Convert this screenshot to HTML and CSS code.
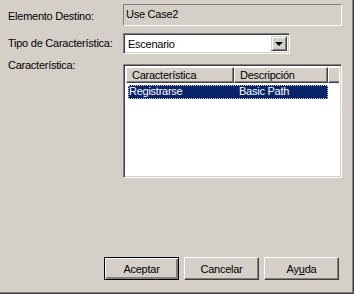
FILE: index.html
```html
<!DOCTYPE html>
<html lang="es">
<head>
  <meta charset="UTF-8">
  <title>Característica</title>
  <link rel="stylesheet" href="styles.css">
</head>
<body>
  <div class="dialog">
    <div class="form">
      <label class="lbl lbl-dest">Elemento Destino:</label>
      <div class="readonly">Use Case2</div>

      <label class="lbl lbl-tipo">Tipo de Característica:</label>
      <div class="combo">
        <span class="combo-text">Escenario</span>
        <span class="combo-btn"><span class="arrow"></span></span>
      </div>

      <label class="lbl lbl-car">Característica:</label>
      <div class="list">
        <div class="list-head">
          <span class="col col1">Característica</span>
          <span class="col col2">Descripción</span>
          <span class="col-rest"></span>
        </div>
        <div class="list-row selected">
          <span class="cell cell1">Registrarse</span>
          <span class="cell cell2">Basic Path</span>
        </div>
      </div>
    </div>

    <div class="buttons">
      <button class="btn default">Aceptar</button>
      <button class="btn">Cancelar</button>
      <button class="btn">Ay<u>u</u>da</button>
    </div>
  </div>
</body>
</html>
```

FILE: styles.css
```css
html, body {
  margin: 0;
  padding: 0;
}
body {
  font-family: "Liberation Sans", Arial, sans-serif;
  font-size: 11px;
  letter-spacing: -0.25px;
  color: #000;
  background: #d4d0c8;
}
.dialog {
  width: 354px;
  height: 294px;
  box-sizing: border-box;
  border-right: 1px solid #404040;
  border-bottom: 1px solid #404040;
  box-shadow: inset -1px -1px 0 #808080;
  display: flex;
  flex-direction: column;
  padding: 4px 12px 0 8px;
}
.form {
  display: grid;
  grid-template-columns: 115px 219px;
  row-gap: 0;
}
.lbl {
  line-height: 13px;
}
.lbl-dest { margin-top: 6px; }
.lbl-tipo { margin-top: 11px; }
.lbl-car { margin-top: 5px; }

.readonly {
  height: 22px;
  box-sizing: border-box;
  border: 1px solid;
  border-color: #808080 #fff #fff #808080;
  padding: 3px 0 0 2px;
  line-height: 13px;
}

.combo {
  margin-top: 7px;
  height: 21px;
  width: 167px;
  box-sizing: border-box;
  border: 1px solid;
  border-color: #808080 #fff #fff #808080;
  box-shadow: inset 1px 1px 0 #404040, inset -1px -1px 0 #d4d0c8;
  background: #fff;
  display: flex;
  align-items: stretch;
  padding: 2px;
}
.combo-text {
  flex: 1;
  padding: 2px 0 0 2px;
  line-height: 13px;
}
.combo-btn {
  width: 16px;
  box-sizing: border-box;
  background: #d4d0c8;
  border: 1px solid;
  border-color: #d4d0c8 #404040 #404040 #d4d0c8;
  box-shadow: inset 1px 1px 0 #fff, inset -1px -1px 0 #808080;
  display: flex;
  align-items: center;
  justify-content: center;
}
.arrow {
  width: 0;
  height: 0;
  border-left: 4px solid transparent;
  border-right: 4px solid transparent;
  border-top: 4px solid #000;
  margin-left: -1px;
}

.list {
  margin-top: 10px;
  height: 114px;
  box-sizing: border-box;
  border: 1px solid;
  border-color: #808080 #fff #fff #808080;
  box-shadow: inset 1px 1px 0 #404040, inset -1px -1px 0 #d4d0c8;
  background: #fff;
  padding: 2px;
  overflow: hidden;
}
.list-head {
  display: flex;
  height: 16px;
}
.col, .col-rest {
  box-sizing: border-box;
  background: #d4d0c8;
  border: 1px solid;
  border-color: #fff #404040 #404040 #fff;
  box-shadow: inset -1px -1px 0 #808080;
  padding: 1px 0 0 5px;
  line-height: 13px;
  white-space: nowrap;
}
.col1 { width: 108px; }
.col2 { width: 94px; }
.col-rest {
  flex: 1;
  border-right: none;
  box-shadow: inset 0 -1px 0 #808080;
}
.list-row {
  display: flex;
  height: 14px;
  margin-top: 2px;
  margin-left: 2px;
  width: 200px;
  box-sizing: border-box;
  line-height: 13px;
}
.list-row.selected {
  background: #0a246a;
  color: #fff;
  outline: 1px dotted #d4d0c8;
  outline-offset: -1px;
}
.cell { white-space: nowrap; }
.cell1 { width: 110px; padding-left: 1px; }
.cell2 { padding-left: 0; }

.buttons {
  margin-top: auto;
  margin-bottom: 13px;
  display: flex;
  justify-content: flex-end;
  gap: 5px;
  padding-right: 2px;
}
.btn {
  width: 75px;
  height: 23px;
  box-sizing: border-box;
  font-family: "Liberation Sans", Arial, sans-serif;
  font-size: 11px;
  letter-spacing: -0.25px;
  color: #000;
  background: #d4d0c8;
  border: 1px solid;
  border-color: #fff #404040 #404040 #fff;
  box-shadow: inset -1px -1px 0 #808080;
  padding: 0;
}
.btn.default {
  border: 1px solid #000;
  box-shadow: inset 1px 1px 0 #fff, inset -2px -2px 0 #808080, inset -1px -1px 0 #404040;
}
.btn u {
  text-decoration: underline;
}
```
